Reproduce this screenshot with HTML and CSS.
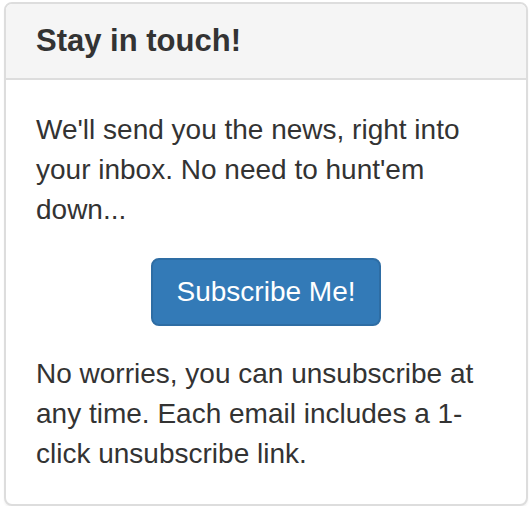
FILE: index.html
```html
<!DOCTYPE html>
<html lang="en">
<head>
  <meta charset="UTF-8" />
  <meta name="viewport" content="width=device-width, initial-scale=1.0" />
  <title>Stay in touch</title>
  <link rel="stylesheet" href="styles.css">
</head>
<body>
  <div class="panel">
    <div class="panel-heading">
      <h3 class="panel-title">Stay in touch!</h3>
    </div>
    <div class="panel-body">
      <p>We'll send you the news, right into your inbox. No need to hunt'em down...</p>
      <div class="actions">
        <button class="btn btn-primary">Subscribe Me!</button>
      </div>
      <p class="last">No worries, you can unsubscribe at any time. Each email includes a 1-click unsubscribe link.</p>
    </div>
  </div>
</body>
</html>
```

FILE: styles.css
```css
* {
  margin: 0;
  padding: 0;
  box-sizing: border-box;
}

body {
  font-family: 'Liberation Sans', Arial, sans-serif;
  font-size: 28px;
  line-height: 40px;
  color: #333;
  background: #fff;
  padding: 2px 4px 0;
}

.panel {
  width: 524px;
  background: #fff;
  border: 2px solid #ddd;
  border-radius: 8px;
  box-shadow: 0 2px 2px rgba(0, 0, 0, 0.05);
  overflow: hidden;
}

.panel-heading {
  background: #f5f5f5;
  border-bottom: 2px solid #ddd;
  padding: 20px 30px;
}

.panel-title {
  font-size: 31px;
  font-weight: 700;
  line-height: 34px;
}

.panel-body {
  padding: 30px 30px;
}

.panel-body p {
  margin-bottom: 28px;
}

.panel-body p.last {
  margin-bottom: 0;
}

.actions {
  text-align: center;
  margin-bottom: 28px;
}

.btn {
  display: inline-block;
  padding: 12px 24px;
  font-family: 'Liberation Sans', Arial, sans-serif;
  font-size: 28px;
  line-height: 40px;
  border: 2px solid transparent;
  border-radius: 8px;
  cursor: pointer;
}

.btn-primary {
  color: #fff;
  background: #337ab7;
  border-color: #2e6da4;
}
```
